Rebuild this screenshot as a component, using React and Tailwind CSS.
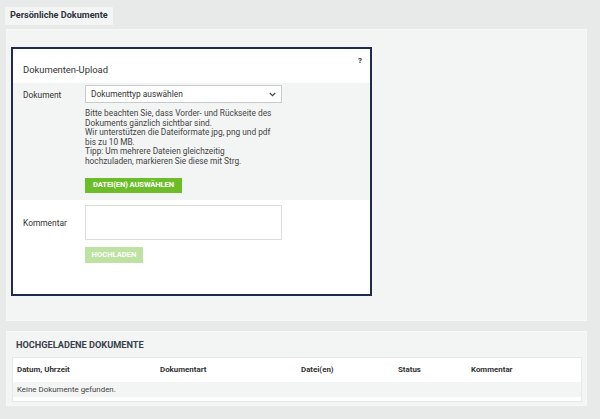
import React from "react";

export default function App() {
  return (
    <div className="w-[600px] h-[419px] overflow-hidden bg-[#e8e9e9] pt-[7px] pl-[5px] pr-[13px] font-['Roboto',sans-serif] text-[#333]">
      <div className="flex w-fit h-[18px] items-center bg-[#f3f4f4] px-[5px] text-[9.1px] font-bold text-[#2f3340]">
        Persönliche Dokumente
      </div>

      <div className="ml-[1px] mt-[4px] h-[292px] border border-[#f6f7f7] bg-[#f3f4f4] pl-[4px] pt-[17px]">
        <div className="w-[361px] h-[249px] border-2 border-[#1e2b4a] bg-white flex flex-col">
          <div className="relative h-[34px] shrink-0">
            <span className="absolute right-[8px] top-[6px] text-[8px] font-bold text-[#333]">?</span>
            <div className="pl-[10px] pt-[14px] text-[9.4px] text-[#333]">Dokumenten-Upload</div>
          </div>

          <div className="flex h-[117px] shrink-0 bg-[#f3f4f4] pl-[10px] pt-[2px]">
            <div className="w-[62px] shrink-0 pt-[4px] text-[8.4px] text-[#333]">Dokument</div>
            <div className="flex flex-col">
              <div className="flex h-[18px] w-[197px] items-center justify-between border border-[#c9cacb] bg-white pl-[5px] pr-[5px]">
                <span className="text-[8.4px] text-[#333]">Dokumenttyp auswählen</span>
                <svg width="7" height="5" viewBox="0 0 7 5" fill="none">
                  <path d="M0.8 1 L3.5 3.7 L6.2 1" stroke="#444" strokeWidth="1.2" />
                </svg>
              </div>
              <div className="mt-[6px] w-[210px] text-[8.3px] leading-[9.6px] text-[#444]">
                <div>Bitte beachten Sie, dass Vorder- und Rückseite des</div>
                <div>Dokuments gänzlich sichtbar sind.</div>
                <div>Wir unterstützen die Dateiformate jpg, png und pdf</div>
                <div>bis zu 10 MB.</div>
                <div>Tipp: Um mehrere Dateien gleichzeitig</div>
                <div>hochzuladen, markieren Sie diese mit Strg.</div>
              </div>
              <div className="mt-[11px] flex h-[15px] w-[97px] items-center justify-center bg-[#6dbd2b] text-[7.6px] font-bold tracking-[-0.1px] text-white">
                DATEI(EN) AUSWÄHLEN
              </div>
            </div>
          </div>

          <div className="flex flex-1 pl-[10px] pt-[5px]">
            <div className="w-[62px] shrink-0 pt-[12px] text-[8.4px] text-[#333]">Kommentar</div>
            <div className="flex flex-col">
              <div className="h-[35px] w-[197px] border border-[#dcdddd] bg-white"></div>
              <div className="mt-[7px] flex h-[16px] w-[58px] items-center justify-center bg-[#bde2a2] text-[7.6px] font-bold text-white">
                HOCHLADEN
              </div>
            </div>
          </div>
        </div>
      </div>

      <div className="ml-[1px] mt-[10px] h-[75px] border border-[#f6f7f7] bg-[#f3f4f4] pl-[5px] pr-[4px]">
        <div className="flex h-[25px] items-center pl-[4px] pt-[1px] text-[9.2px] font-bold text-[#3a3f4c]">
          HOCHGELADENE DOKUMENTE
        </div>
        <div className="border border-[#e6e7e7] bg-white pb-[4px]">
          <div className="flex h-[24px] items-center pl-[4px] text-[7.9px] font-bold text-[#333]">
            <div className="w-[143px]">Datum, Uhrzeit</div>
            <div className="w-[141px]">Dokumentart</div>
            <div className="w-[97px]">Datei(en)</div>
            <div className="w-[73px]">Status</div>
            <div>Kommentar</div>
          </div>
          <div className="flex h-[15px] items-center bg-[#f3f4f4] pl-[4px] text-[7.9px] text-[#444]">
            Keine Dokumente gefunden.
          </div>
        </div>
      </div>
    </div>
  );
}
